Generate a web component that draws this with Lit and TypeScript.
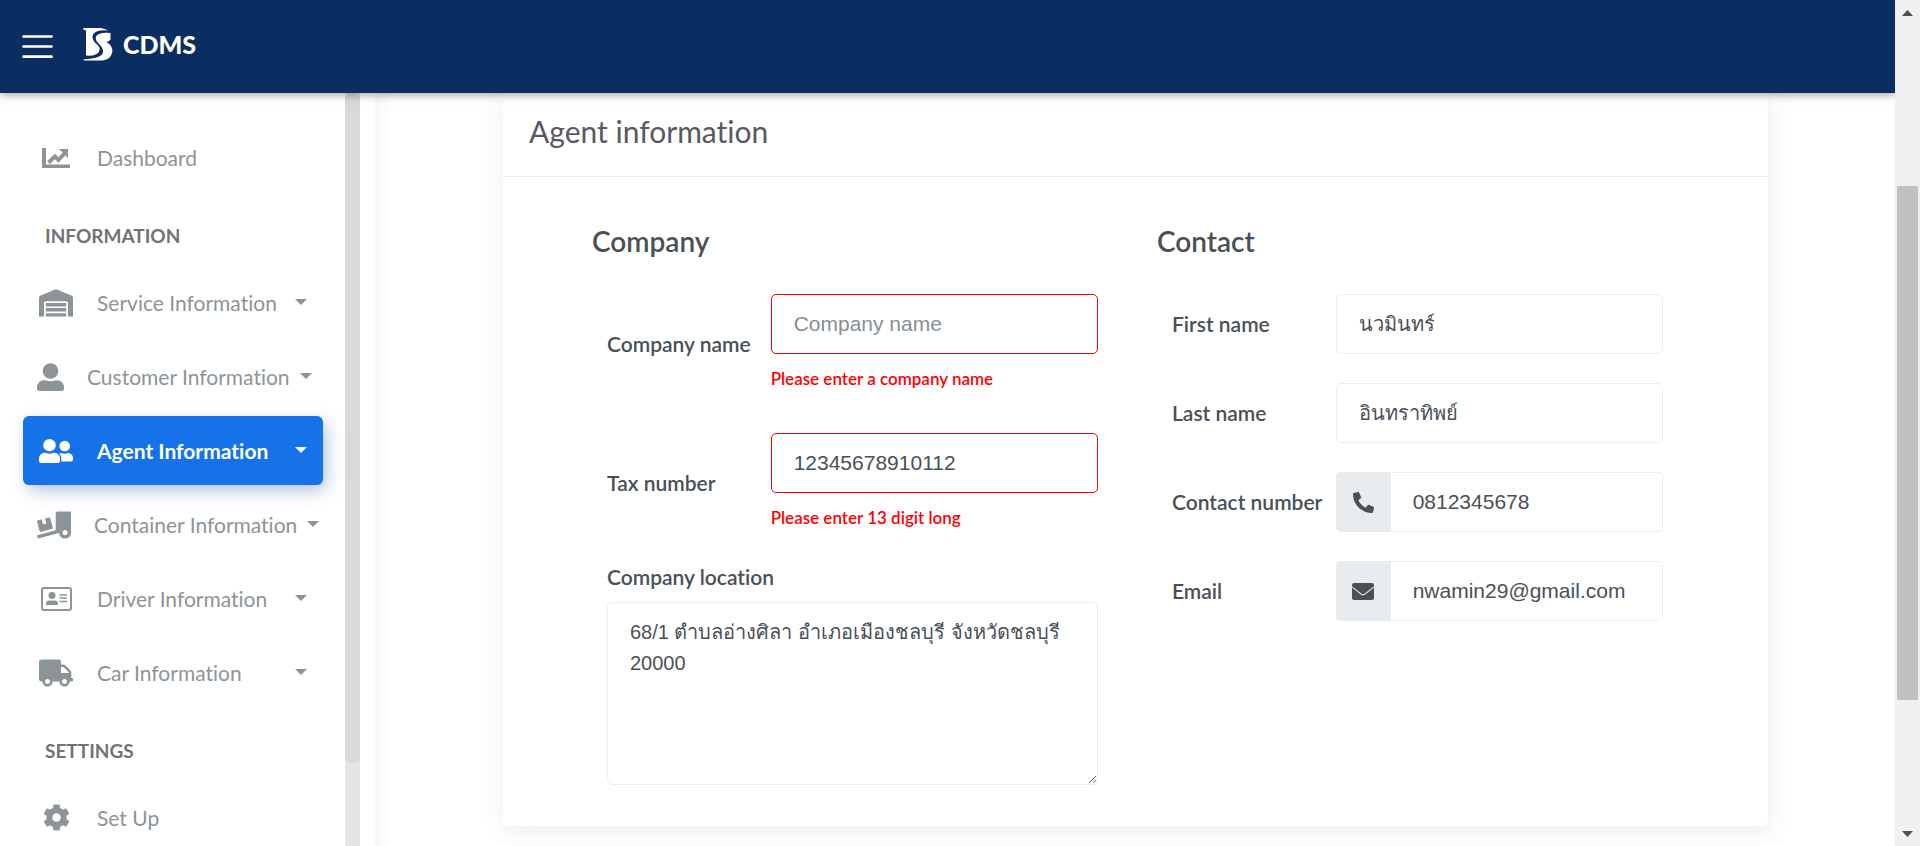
import { LitElement, html, css, svg, nothing } from "lit";
import { customElement, property } from "lit/decorators.js";
import { classMap } from "lit/directives/class-map.js";

const icons: Record<string, { box: string; w: number; h: number; body: unknown }> = {
  chart: {
    box: "0 0 28 20", w: 28, h: 20,
    body: svg`<path d="M0 0H4V16.5H28V20H0Z"/><path d="M6.500 14.500L13 8.500L16.500 12L23 5" fill="none" stroke="currentColor" stroke-width="3.900"/><path d="M17 1H26V10Z"/>`,
  },
  warehouse: {
    box: "0 0 640 512", w: 34, h: 28,
    body: svg`<path d="M504 352H136.4c-4.4 0-8 3.6-8 8l-.1 48c0 4.4 3.6 8 8 8H504c4.4 0 8-3.6 8-8v-48c0-4.4-3.6-8-8-8zm0 96H136.1c-4.4 0-8 3.6-8 8l-.1 48c0 4.400 3.600 8 8 8h368c4.400 0 8-3.600 8-8v-48c0-4.400-3.600-8-8-8zm0-192H136.600c-4.400 0-8 3.600-8 8l-.1 48c0 4.400 3.600 8 8 8H504c4.400 0 8-3.600 8-8v-48c0-4.400-3.600-8-8-8zm106.500-139L338.400 3.700a48.150 48.150 0 0 0-36.900 0L29.500 117C11.700 124.500 0 141.900 0 161.300V504c0 4.400 3.600 8 8 8h80c4.400 0 8-3.600 8-8V256c0-17.600 14.600-32 32.600-32h382.800c18 0 32.600 14.400 32.600 32v248c0 4.400 3.600 8 8 8h80c4.400 0 8-3.600 8-8V161.300c0-19.400-11.700-36.800-29.500-44.300z"/>`,
  },
  user: {
    box: "0 0 27 28", w: 27, h: 28,
    body: svg`<circle cx="13.500" cy="8" r="7.800"/><path d="M7 17.200h1.500q5 2.200 10 0H20a7 7 0 0 1 7 7V25.500a2.500 2.500 0 0 1-2.500 2.500h-22A2.500 2.500 0 0 1 0 25.500V24.200a7 7 0 0 1 7-7z"/>`,
  },
  users: {
    box: "0 0 34 24", w: 34, h: 24,
    body: svg`<circle cx="10.500" cy="6.200" r="6.200"/><circle cx="25.700" cy="7" r="5.300"/><path d="M5.500 13.800h1q4 1.700 8 0h1a5.500 5.500 0 0 1 5.500 5.500V22a2 2 0 0 1-2 2H2a2 2 0 0 1-2-2v-2.700a5.500 5.500 0 0 1 5.500-5.500z"/><path d="M20.300 14.700l2-.7q3.400 1.500 6.800 0a5 5 0 0 1 4.900 5V20.500a2 2 0 0 1-2 2H22.300V19q-.1-2.500-2-4.300z"/>`,
  },
  loading: {
    box: "0 0 640 512", w: 34, h: 28,
    body: svg`<path d="M50.2 375.6c2.3 8.5 11.1 13.6 19.6 11.3l216.4-58c8.5-2.3 13.6-11.1 11.3-19.6l-49.7-185.5c-2.3-8.5-11.1-13.6-19.6-11.3L151 133.300l24.800 92.700-61.800 16.500-24.800-92.700-77.300 20.700C3.400 172.800-1.700 181.600.6 190.100l49.600 185.500zM384 0c-17.700 0-32 14.300-32 32v323.600L5.900 450c-4.300 1.200-6.800 5.600-5.600 9.800l12.600 46.300c1.200 4.300 5.600 6.800 9.800 5.600l393.700-107.400C418.800 464.100 467.600 512 528 512c61.900 0 112-50.100 112-112V0H384zm144 448c-26.500 0-48-21.500-48-48s21.500-48 48-48 48 21.500 48 48-21.500 48-48 48z"/>`,
  },
  idcard: {
    box: "0 0 31 24", w: 31, h: 24,
    body: svg`<rect x="1" y="1" width="29" height="22" rx="2" fill="none" stroke="currentColor" stroke-width="2"/><circle cx="11" cy="8.600" r="3.500"/><path d="M5 18v-1.200a3.200 3.200 0 0 1 3.200-3.200h5.600a3.200 3.200 0 0 1 3.200 3.200V18z"/><path d="M18.500 8H26M18.500 11H26M18.500 14.500H26" stroke="currentColor" stroke-width="1.500"/>`,
  },
  truck: {
    box: "0 0 640 512", w: 34, h: 28,
    body: svg`<path d="M624 352h-16V243.900c0-12.700-5.100-24.900-14.100-33.900L494 110.100c-9-9-21.200-14.100-33.900-14.100H416V48c0-26.500-21.500-48-48-48H48C21.500 0 0 21.500 0 48v320c0 26.500 21.500 48 48 48h16c0 53 43 96 96 96s96-43 96-96h128c0 53 43 96 96 96s96-43 96-96h48c8.800 0 16-7.200 16-16v-32c0-8.800-7.200-16-16-16zM160 464c-26.500 0-48-21.500-48-48s21.500-48 48-48 48 21.500 48 48-21.500 48-48 48zm320 0c-26.500 0-48-21.500-48-48s21.500-48 48-48 48 21.500 48 48-21.500 48-48 48zm80-208H416V144h44.100l99.900 99.900V256z"/>`,
  },
  cog: {
    box: "0 0 512 512", w: 27, h: 27,
    body: svg`<path d="M487.400 315.700l-42.600-24.600c4.300-23.200 4.300-47 0-70.200l42.600-24.600c4.900-2.800 7.100-8.600 5.500-14-11.100-35.600-30-67.800-54.700-94.600-3.800-4.100-10-5.100-14.800-2.300L380.800 110c-17.900-15.400-38.500-27.300-60.800-35.100V25.800c0-5.600-3.900-10.500-9.400-11.700-36.700-8.200-74.300-7.800-109.200 0-5.500 1.200-9.400 6.100-9.400 11.700V75c-22.200 7.900-42.800 19.800-60.800 35.100L88.700 85.500c-4.900-2.800-11-1.900-14.800 2.300-24.700 26.700-43.600 58.900-54.700 94.600-1.700 5.400.6 11.200 5.500 14L67.300 221c-4.300 23.200-4.300 47 0 70.200l-42.600 24.600c-4.900 2.800-7.100 8.600-5.500 14 11.100 35.600 30 67.800 54.700 94.600 3.800 4.100 10 5.100 14.800 2.300l42.600-24.600c17.900 15.400 38.500 27.300 60.800 35.100v49.200c0 5.600 3.900 10.500 9.400 11.700 36.700 8.200 74.300 7.800 109.200 0 5.500-1.200 9.400-6.100 9.400-11.700v-49.200c22.200-7.900 42.800-19.800 60.800-35.100l42.600 24.600c4.900 2.800 11 1.900 14.800-2.300 24.700-26.700 43.600-58.900 54.700-94.600 1.500-5.500-.7-11.300-5.600-14.100zM256 336c-44.100 0-80-35.900-80-80s35.900-80 80-80 80 35.900 80 80-35.900 80-80 80z"/>`,
  },
  phone: {
    box: "0 0 512 512", w: 21, h: 21,
    body: svg`<path d="M497.390 361.800l-112-48a24 24 0 0 0-28 6.900l-49.600 60.600A370.660 370.660 0 0 1 130.600 204.110l60.600-49.600a23.940 23.940 0 0 0 6.900-28l-48-112A24.160 24.160 0 0 0 122.600.61l-104 24A24 24 0 0 0 0 48c0 256.500 207.900 464 464 464a24 24 0 0 0 23.400-18.600l24-104a24.290 24.290 0 0 0-14.010-27.600z"/>`,
  },
  envelope: {
    box: "0 0 22 17", w: 22, h: 17,
    body: svg`<path d="M2 0H20a2 2 0 0 1 2 2V3.200L12.500 10.800q-1.500 1.100-3 0L0 3.200V2A2 2 0 0 1 2 0z"/><path d="M0 4.600L9 11.800q2 1.400 4 0L22 4.600V15a2 2 0 0 1-2 2H2a2 2 0 0 1-2-2z"/>`,
  },
  caret: { box: "0 0 12 6", w: 12, h: 6, body: svg`<path d="M0 0H12L6 6Z"/>` },
  up: { box: "0 0 11 6", w: 11, h: 6, body: svg`<path d="M0 6L5.500 0L11 6Z"/>` },
  down: { box: "0 0 11 6", w: 11, h: 6, body: svg`<path d="M0 0L5.500 6L11 0Z"/>` },
  menu: {
    box: "0 0 32 24", w: 32, h: 24,
    body: svg`<path d="M1.500 1.500H29.500M1.500 11.500H29.500M1.500 21.700H29.500" stroke="currentColor" stroke-width="2.700" stroke-linecap="round"/>`,
  },
  logo: {
    box: "0 0 30 33", w: 30, h: 33,
    body: svg`<path d="M.3 0H17.500Q22 .5 25.500 2.500Q13.500 1.500 10 6.500Q8 11 13.500 16Q19 20.500 15.500 24.500Q12.500 28.300 3 27.500V2.500L.3 1.500Z"/><path d="M27.500 5V11.500Q26.500 13.200 23.500 14Q30 17.500 29.300 24Q28 31.500 19.500 32.500H.7V31.200Q14 31 18.500 27Q22 23 17.500 17.500Q11.500 12 13 8.500Q16 3.800 27.500 5Z"/>`,
  },
};

const icon = (name: string) => {
  const i = icons[name];
  return html`<svg viewBox=${i.box} width=${i.w} height=${i.h} fill="currentColor" aria-hidden="true">${i.body}</svg>`;
};

const base = css`
  * { box-sizing: border-box; }
  svg { display: block; flex: none; }
`;

@customElement("app-bar")
class AppBar extends LitElement {
  static styles = [base, css`
    :host { display: block; position: relative; z-index: 2; }
    .bar {
      display: flex; align-items: center; height: 93px; padding-left: 22px;
      background: #0b2e62; color: #fff; box-shadow: 0 0 10px rgba(0, 0, 0, .5);
      clip-path: inset(0 0 -20px 0);
    }
    .menu { padding: 0; border: 0; background: none; color: inherit; }
    .brand {
      display: flex; align-items: center; gap: 10px; margin-left: 29px; padding-bottom: 4px;
      color: inherit; text-decoration: none;
      font-size: 25px; line-height: 33px; font-weight: 900;
    }
  `];
  render() {
    return html`<header class="bar">
      <button class="menu" type="button" aria-label="Menu">${icon("menu")}</button>
      <a class="brand" href="#">${icon("logo")}<span>CDMS</span></a>
    </header>`;
  }
}

@customElement("nav-item")
class NavItem extends LitElement {
  @property() icon = "";
  @property() label = "";
  @property({ type: Boolean }) active = false;
  @property({ type: Boolean }) wide = false;
  @property({ type: Boolean }) menu = false;
  static styles = [base, css`
    :host { display: block; }
    .item {
      display: flex; align-items: center; height: 69px; padding: 0 16px; border-radius: 6px;
      color: #8d9498; text-decoration: none; font-size: 21px; line-height: 30px; white-space: nowrap;
    }
    .pic { display: flex; justify-content: center; width: 34px; margin-right: 24px; }
    .caret { margin-left: auto; padding-bottom: 2px; }
    .wide { padding: 0 0 0 14px; }
    .wide .pic { width: auto; margin-right: 23px; }
    .wide .caret { margin-left: 10px; }
    .active {
      background: #1572e8; color: #fff; font-weight: 700;
      box-shadow: 4px 4px 20px 0 rgba(0, 0, 0, .04), 4px 6px 18px -2px rgba(21, 80, 180, .35);
    }
  `];
  render() {
    return html`<a href="#" class=${classMap({ item: true, active: this.active, wide: this.wide })}>
      <span class="pic">${icon(this.icon)}</span><span>${this.label}</span>
      ${this.menu ? html`<span class="caret">${icon("caret")}</span>` : nothing}
    </a>`;
  }
}

@customElement("side-nav")
class SideNav extends LitElement {
  static styles = [base, css`
    :host { display: grid; grid-template-columns: 1fr 15px 15px; grid-template-rows: minmax(0, 1fr); min-height: 0; overflow: hidden; }
    .list { display: flex; flex-direction: column; gap: 5px; padding: 30px 22px 0 23px; }
    .section { margin: 0; padding: 27px 0 15px 22px; font-size: 19px; line-height: 24px; font-weight: 700; color: #727275; }
    .track { background: #e4e4e4; }
    .thumb { height: 89%; border-radius: 8px; background: #d9d9d9; }
  `];
  render() {
    return html`<nav class="list">
        <nav-item icon="chart" label="Dashboard"></nav-item>
        <h4 class="section">INFORMATION</h4>
        <nav-item icon="warehouse" label="Service Information" menu></nav-item>
        <nav-item icon="user" label="Customer Information" menu wide></nav-item>
        <nav-item icon="users" label="Agent Information" menu active></nav-item>
        <nav-item icon="loading" label="Container Information" menu wide></nav-item>
        <nav-item icon="idcard" label="Driver Information" menu></nav-item>
        <nav-item icon="truck" label="Car Information" menu></nav-item>
        <h4 class="section">SETTINGS</h4>
        <nav-item icon="cog" label="Set Up"></nav-item>
      </nav>
      <div class="track"><div class="thumb"></div></div>`;
  }
}

@customElement("agent-form")
class AgentForm extends LitElement {
  static styles = [base, css`
    :host { display: block; }
    .card {
      margin: 0 127px 0 128px; background: #fff; border-radius: 0 0 6px 6px;
      box-shadow: 2px 6px 25px 0 rgba(69, 65, 78, .1);
      color: #495057;
    }
    .title { margin: 0; padding: 16px 26px 22px; border-bottom: 1px solid #ebecec; font-size: 30px; line-height: 45px; font-weight: 400; color: #575962; }
    .body { display: grid; grid-template-columns: 1fr 1fr; gap: 59px; padding: 46px 105px 41px 89px; }
    .heading { margin: 0 0 35px; font-size: 28px; line-height: 36px; font-weight: 600; }
    .fields { display: grid; gap: 29px; padding-left: 15px; }
    .company { row-gap: 38px; }
    .row { display: grid; grid-template-columns: 1fr 2fr; align-items: center; }
    .label { font-size: 21px; line-height: 30px; font-weight: 600; white-space: nowrap; }
    .company .label { padding-bottom: 2px; }
    .box {
      display: block; width: 100%; min-width: 0; height: 60px; padding: 0 22px; border: 1px solid #ebedf2; border-radius: 5px;
      background: #fff; color: #495057; font-family: "Liberation Sans", Arial, sans-serif; font-size: 21px; line-height: 31px; outline: 0;
    }
    .box::placeholder { color: #868e96; opacity: 1; }
    .thai { font-size: 20px; }
    .bad { border-color: #f00; }
    .error { margin: 14px 0 5px; color: #f00; font-size: 17px; line-height: 22px; font-weight: 600; }
    .place { padding: 28px 0 0 15px; }
    .place .label { display: block; margin-bottom: 10px; }
    .area { height: 183px; padding: 14px 22px; resize: both; }
    .group { display: grid; grid-template-columns: 55px 1fr; }
    .addon { display: grid; place-items: center; background: #e9ecef; border-radius: 5px 0 0 5px; }
    .group .box { border-left: 0; border-radius: 0 5px 5px 0; }
  `];
  render() {
    return html`<form class="card">
      <h2 class="title">Agent information</h2>
      <div class="body">
        <section>
          <h3 class="heading">Company</h3>
          <div class="fields company">
            <div class="row">
              <label class="label" for="company">Company name</label>
              <div><input class="box bad" id="company" placeholder="Company name"><p class="error">Please enter a company name</p></div>
            </div>
            <div class="row">
              <label class="label" for="tax">Tax number</label>
              <div><input class="box bad" id="tax" value="12345678910112"><p class="error">Please enter 13 digit long</p></div>
            </div>
          </div>
          <div class="place">
            <label class="label" for="location">Company location</label>
            <textarea class="box area thai" id="location" .value=${"68/1 ตำบลอ่างศิลา อำเภอเมืองชลบุรี จังหวัดชลบุรี 20000"}></textarea>
          </div>
        </section>
        <section>
          <h3 class="heading">Contact</h3>
          <div class="fields">
            <div class="row"><label class="label" for="first">First name</label><input class="box thai" id="first" value="นวมินทร์"></div>
            <div class="row"><label class="label" for="last">Last name</label><input class="box thai" id="last" value="อินทราทิพย์"></div>
            <div class="row">
              <label class="label" for="phone">Contact number</label>
              <div class="group"><span class="addon">${icon("phone")}</span><input class="box" id="phone" type="tel" value="0812345678"></div>
            </div>
            <div class="row">
              <label class="label" for="email">Email</label>
              <div class="group"><span class="addon">${icon("envelope")}</span><input class="box" id="email" type="email" value="nwamin29@gmail.com"></div>
            </div>
          </div>
        </section>
      </div>
    </form>`;
  }
}

@customElement("app-root")
class AppRoot extends LitElement {
  static styles = [base, css`
    :host {
      display: grid; grid-template-columns: 1fr 25px; height: 100vh; overflow: hidden;
      background: #fff; font-family: Lato, sans-serif; font-variant-ligatures: none;
    }
    .page { display: grid; grid-template-rows: auto 1fr; min-height: 0; min-width: 0; }
    .main { display: grid; grid-template-columns: 375px 1fr; grid-template-rows: minmax(0, 1fr); min-height: 0; }
    .content { min-width: 0; overflow: hidden; background: linear-gradient(to right, #f8f8f8, #fefefe 16px, #fff 20px); }
    .scroll { display: grid; grid-template-rows: 25px 1fr 25px; justify-items: center; align-items: center; background: #f0f0f0; color: #505050; }
    .track { display: grid; grid-template-rows: 161fr 514fr 121fr; width: 21px; height: 100%; }
    .thumb { grid-row: 2; background: #c1c1c1; }
  `];
  render() {
    return html`<div class="page">
        <app-bar></app-bar>
        <div class="main"><side-nav></side-nav><main class="content"><agent-form></agent-form></main></div>
      </div>
      <div class="scroll">${icon("up")}<div class="track"><div class="thumb"></div></div>${icon("down")}</div>`;
  }
}
